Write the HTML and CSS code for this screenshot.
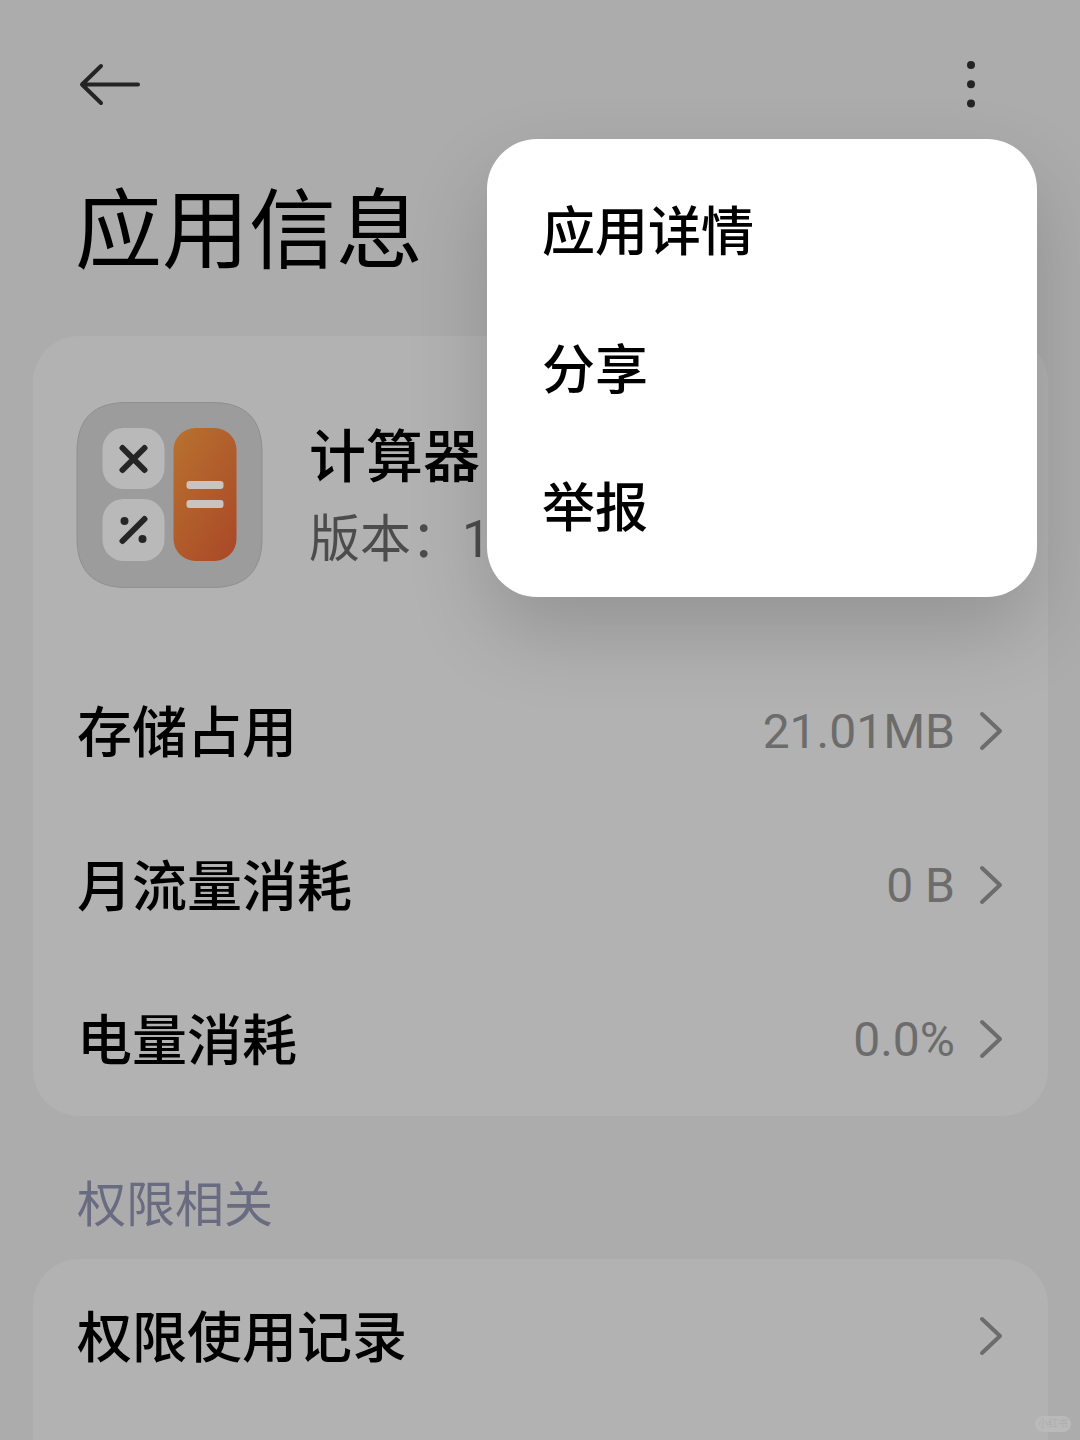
FILE: index.html
```html
<!DOCTYPE html>
<html lang="zh-CN">
<head>
<meta charset="utf-8">
<meta name="viewport" content="width=device-width, initial-scale=1">
<title>应用信息</title>
<link rel="stylesheet" href="styles.css">
</head>
<body>
<div class="page">
  <header class="topbar">
    <button class="icon-button" type="button" aria-label="返回">
      <svg width="64" height="48" viewBox="0 0 64 48" fill="none" stroke="#242424" stroke-width="4" stroke-linecap="round" stroke-linejoin="round"><path d="M23 6 4 24.500l19 18.500M5 24.500h55"/></svg>
    </button>
    <div class="more">
      <button class="icon-button" type="button" aria-label="更多" aria-expanded="true">
        <svg width="16" height="48" viewBox="0 0 16 48" fill="#242424"><circle cx="8" cy="5" r="4"/><circle cx="8" cy="24.300" r="4"/><circle cx="8" cy="43.500" r="4"/></svg>
      </button>
      <div class="menu" role="menu">
        <button class="menu-item" type="button" role="menuitem">应用详情</button>
        <button class="menu-item" type="button" role="menuitem">分享</button>
        <button class="menu-item" type="button" role="menuitem">举报</button>
      </div>
    </div>
  </header>

  <h1 class="title">应用信息</h1>

  <main class="content">
    <section class="card">
      <div class="app">
        <svg class="app-icon" viewBox="0 0 186 186" aria-hidden="true">
          <defs>
            <linearGradient id="equals" x1="0" y1="0" x2="0.800" y2="1">
              <stop offset="0" stop-color="#b8722f"/>
              <stop offset="1" stop-color="#ab4b28"/>
            </linearGradient>
          </defs>
          <path d="M0.500 50C0.500 17 17 0.500 50 0.500h86c33 0 49.500 16.500 49.500 49.500v86c0 33-16.500 49.500-49.500 49.500H50c-33 0-49.500-16.500-49.500-49.500Z" fill="#9c9c9c" stroke="#8f8f8f"/>
          <rect x="26" y="26" width="62" height="61" rx="21" fill="#b9b9b9"/>
          <rect x="26" y="97" width="62" height="62" rx="21" fill="#b9b9b9"/>
          <rect x="97" y="26" width="63" height="133" rx="22" fill="url(#equals)"/>
          <path d="M46 46l22 22M68 46 46 68M46 139l22-22" stroke="#252525" stroke-width="6" stroke-linecap="round"/>
          <circle cx="48" cy="119" r="4" fill="#252525"/>
          <circle cx="66" cy="137" r="4" fill="#252525"/>
          <rect x="110" y="79" width="37" height="8" rx="3" fill="#cbc3c0"/>
          <rect x="110" y="98" width="37" height="8" rx="3" fill="#cbc3c0"/>
        </svg>
        <div class="app-text">
          <h2 class="app-name">计算器</h2>
          <p class="app-version">版本：1</p>
        </div>
      </div>
      <a class="row" href="#storage">
        <span class="label">存储占用</span>
        <span class="value">21.01MB</span>
        <svg class="chevron" viewBox="0 0 24 40"><path d="M3 3l18 17L3 37"/></svg>
      </a>
      <a class="row" href="#traffic">
        <span class="label">月流量消耗</span>
        <span class="value">0 B</span>
        <svg class="chevron" viewBox="0 0 24 40"><path d="M3 3l18 17L3 37"/></svg>
      </a>
      <a class="row" href="#battery">
        <span class="label">电量消耗</span>
        <span class="value">0.0%</span>
        <svg class="chevron" viewBox="0 0 24 40"><path d="M3 3l18 17L3 37"/></svg>
      </a>
    </section>

    <h2 class="section-title">权限相关</h2>

    <section class="card card-open">
      <a class="row" href="#records">
        <span class="label">权限使用记录</span>
        <svg class="chevron" viewBox="0 0 24 40"><path d="M3 3l18 17L3 37"/></svg>
      </a>
    </section>
  </main>
  <span class="mark">小红书</span>
</div>
</body>
</html>
```
FILE: styles.css
```css
* {
  box-sizing: border-box;
}

body {
  margin: 0;
  background: #acacac;
  color: #000;
  font-family: Roboto, "Noto Sans CJK SC", sans-serif;
}

h1, h2, p {
  margin: 0;
  font-weight: 400;
}

button {
  display: block;
  border: 0;
  padding: 0;
  background: none;
  color: inherit;
  font: inherit;
  text-align: left;
}

a {
  color: inherit;
  text-decoration: none;
}

svg {
  display: block;
}

.page {
  position: relative;
  display: flex;
  flex-direction: column;
  min-height: 100vh;
  overflow: hidden;
}

.topbar {
  display: flex;
  align-items: center;
  justify-content: space-between;
  height: 168px;
  padding: 0 101px 0 78px;
}

.more {
  position: relative;
}

.menu {
  position: absolute;
  z-index: 1;
  top: 79px;
  right: -58px;
  width: 550px;
  padding: 20px 0 24px;
  border-radius: 50px;
  background: #fff;
  box-shadow: 0 36px 80px rgba(0, 0, 0, 0.17);
}

.menu-item {
  width: 100%;
  height: 138px;
  padding: 0 55px;
  font-size: 53px;
  font-weight: 500;
}

.title {
  padding: 0 75px 40px;
  font-size: 87px;
  line-height: 128px;
}

.content {
  display: flex;
  flex: 1;
  flex-direction: column;
  padding: 0 32px 0 33px;
}

.card {
  border-radius: 46px;
  background: #b2b2b2;
}

.card-open {
  flex: 1;
  border-radius: 46px 46px 0 0;
}

.app {
  display: flex;
  align-items: center;
  gap: 46px;
  padding: 66px 43px;
}

.app-icon {
  width: 187px;
  height: 186px;
}

.app-text {
  padding-top: 6px;
}

.app-name {
  font-size: 57px;
  font-weight: 500;
  line-height: 84px;
}

.app-version {
  color: #4c4c4c;
  font-size: 51px;
  line-height: 80px;
}

.row {
  display: flex;
  align-items: center;
  height: 154px;
  padding: 0 45px 0 44px;
}

.label {
  flex: 1;
  padding-bottom: 6px;
  font-size: 55px;
  font-weight: 500;
}

.value {
  color: #6c6c6c;
  font-size: 48px;
}

.chevron {
  width: 24px;
  height: 40px;
  margin-left: 24px;
  fill: none;
  stroke: #6c6c6c;
  stroke-width: 4;
  stroke-linecap: round;
  stroke-linejoin: round;
}

.section-title {
  padding: 58px 44px 21px;
  color: #696b80;
  font-size: 49px;
  line-height: 64px;
}

.mark {
  position: absolute;
  right: 9px;
  bottom: 8px;
  padding: 0 3px;
  border-radius: 8px;
  background: #bababa;
  color: #adadad;
  font-size: 10px;
  line-height: 16px;
}
```
